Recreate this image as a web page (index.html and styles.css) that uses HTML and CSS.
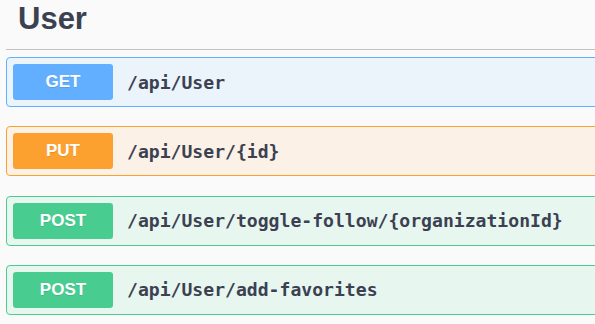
FILE: index.html
```html
<!DOCTYPE html>
<html lang="en">
<head>
  <meta charset="UTF-8" />
  <meta name="viewport" content="width=device-width, initial-scale=1.0"/>
  <title>User API</title>
  <link rel="stylesheet" href="styles.css">
</head>
<body>
  <div class="tag-section">
    <h3 class="tag-title">User</h3>
    <div class="operations">
      <div class="opblock opblock-get">
        <span class="method">GET</span>
        <span class="path">/api/User</span>
      </div>
      <div class="opblock opblock-put">
        <span class="method">PUT</span>
        <span class="path">/api/User/{id}</span>
      </div>
      <div class="opblock opblock-post">
        <span class="method">POST</span>
        <span class="path">/api/User/toggle-follow/{organizationId}</span>
      </div>
      <div class="opblock opblock-post">
        <span class="method">POST</span>
        <span class="path">/api/User/add-favorites</span>
      </div>
    </div>
  </div>
</body>
</html>
```

FILE: styles.css
```css
body {
  margin: 0;
  background: #fafafa;
  font-family: 'Liberation Sans', Arial, sans-serif;
  color: #3b4151;
  overflow: hidden;
}
.tag-section {
  padding-left: 6px;
  margin-right: -30px;
}
.tag-title {
  margin: 0;
  padding: 1px 0 13px 12px;
  font-size: 31px;
  line-height: 35px;
  font-weight: 700;
  border-bottom: 1px solid #c0c2c6;
}
.operations {
  padding-top: 7px;
}
.opblock {
  display: flex;
  align-items: center;
  gap: 14px;
  height: 50px;
  box-sizing: border-box;
  padding: 0 6px;
  margin-bottom: 19.3px;
  border: 1px solid;
  border-radius: 4px;
}
.method {
  min-width: 100px;
  height: 36px;
  border-radius: 3px;
  display: flex;
  align-items: center;
  justify-content: center;
  color: #fff;
  font-size: 17px;
  font-weight: 700;
  text-shadow: 0 1px 0 rgba(0, 0, 0, 0.1);
}
.path {
  font-family: 'DejaVu Sans Mono', monospace;
  font-size: 18.1px;
  font-weight: 700;
  color: #3b4151;
}
.opblock-get {
  border-color: #61affe;
  background: #ebf3fb;
}
.opblock-get .method {
  background: #61affe;
}
.opblock-put {
  border-color: #fca130;
  background: #fbf1e6;
}
.opblock-put .method {
  background: #fca130;
}
.opblock-post {
  border-color: #49cc90;
  background: #e8f6f0;
}
.opblock-post .method {
  background: #49cc90;
}
```
